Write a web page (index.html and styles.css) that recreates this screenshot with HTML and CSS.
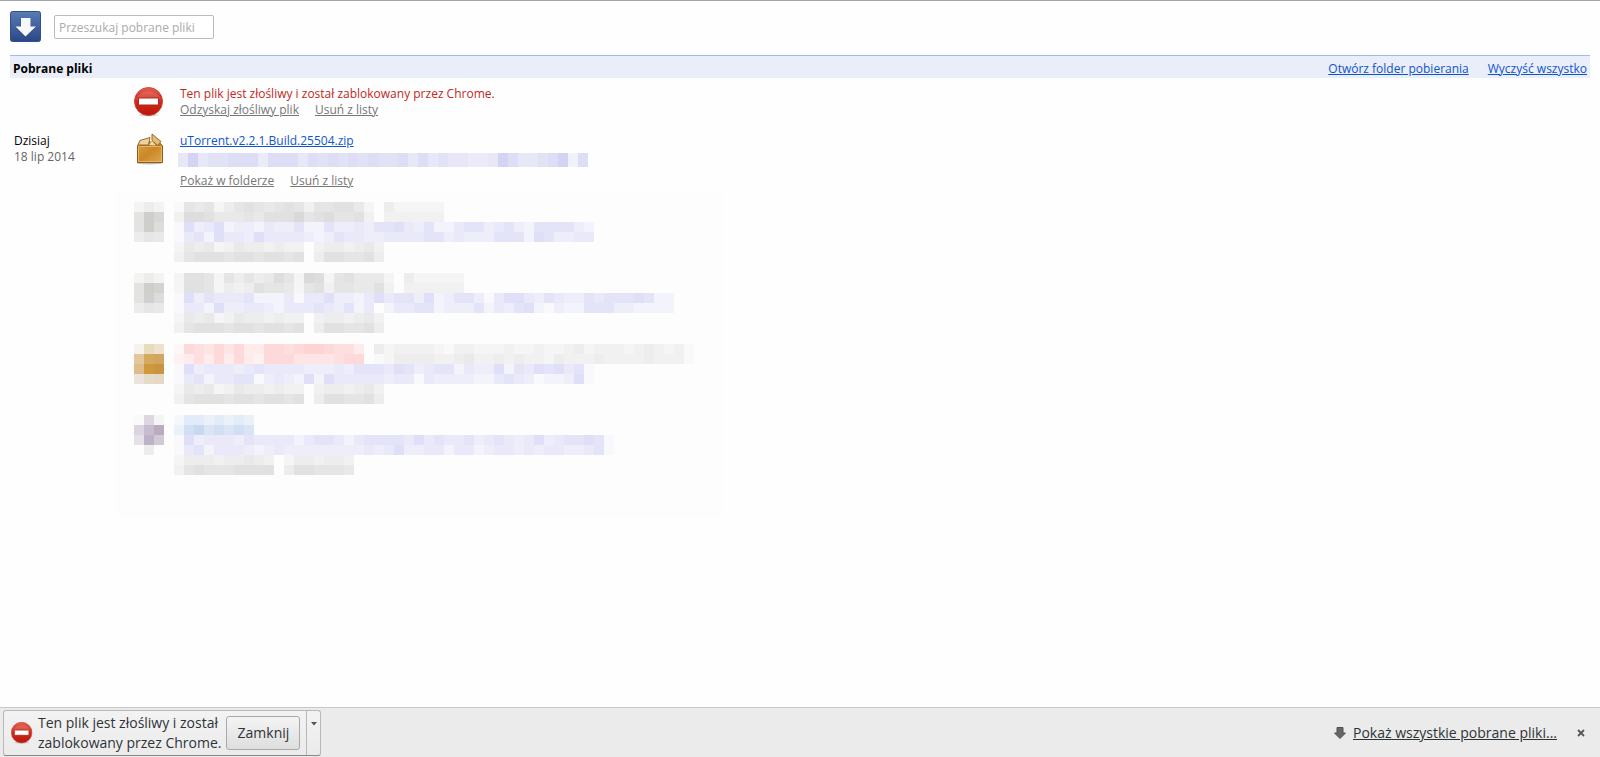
FILE: index.html
```html
<!DOCTYPE html>
<html lang="pl">
<head>
<meta charset="utf-8">
<title>Pobrane pliki</title>
<link rel="stylesheet" href="styles.css">
</head>
<body>
<svg class="defs" width="0" height="0" aria-hidden="true">
  <defs>
    <linearGradient id="blue" x1="0" y1="0" x2="0" y2="1"><stop offset="0" stop-color="#5b7bb4"/><stop offset=".5" stop-color="#41619f"/><stop offset="1" stop-color="#2b4685"/></linearGradient>
    <linearGradient id="red" x1="0" y1="0" x2="0" y2="1"><stop offset="0" stop-color="#e4604f"/><stop offset=".45" stop-color="#d02d1f"/><stop offset="1" stop-color="#b91509"/></linearGradient>
    <linearGradient id="box" x1="0" y1="0" x2="1" y2="1"><stop offset="0" stop-color="#d8a046"/><stop offset=".5" stop-color="#cb8826"/><stop offset="1" stop-color="#e0a754"/></linearGradient>
    <symbol id="stop" viewBox="0 0 30 30">
      <ellipse cx="14.500" cy="28" rx="10" ry="1.500" fill="#000" opacity=".15"/>
      <circle cx="14.500" cy="14.500" r="14" fill="url(#red)" stroke="#c9453a"/>
      <path d="M2 13a13 12 0 0 1 25 0q-13-4-25 0z" fill="#fff" opacity=".12"/>
      <rect x="4.500" y="11" width="20" height="7" fill="#fff" stroke="#b3261b"/>
    </symbol>
  </defs>
</svg>

<header class="top">
  <a class="logo" href="#" aria-label="Pobrane pliki">
    <svg viewBox="0 0 31 31"><rect x=".5" y=".5" width="30" height="30" rx="2" fill="url(#blue)" stroke="#304f8c"/><path d="M10.500 8h10v8h5.500L15.500 26.500 5 16h5.500z" fill="#1e3568" opacity=".5"/><path d="M11 7h9.500v8.500H26L15.500 25.500 5.500 15.500H11z" fill="#f7f8fb"/></svg>
  </a>
  <input class="search" type="text" placeholder="Przeszukaj pobrane pliki" aria-label="Przeszukaj pobrane pliki">
</header>

<main class="content">
  <div class="bar">
    <h1>Pobrane pliki</h1>
    <nav><a href="#">Otwórz folder pobierania</a><a href="#">Wyczyść wszystko</a></nav>
  </div>

  <article class="item">
    <div class="date"></div>
    <svg class="icon"><use href="#stop"/></svg>
    <div class="info">
      <p class="danger">Ten plik jest złośliwy i został zablokowany przez Chrome.</p>
      <p class="actions"><a href="#">Odzyskaj złośliwy plik</a><a href="#">Usuń z listy</a></p>
    </div>
  </article>

  <article class="item">
    <div class="date"><p class="day">Dzisiaj</p><p>18 lip 2014</p></div>
    <svg class="icon" viewBox="0 0 30 32">
      <ellipse cx="15.500" cy="30" rx="13" ry="1.500" fill="#000" opacity=".25"/>
      <path d="M3.500 13L6 9h19l3.500 4v16.500h-25z" fill="url(#box)" stroke="#8f5a14"/>
      <path d="M5 13l3-3h16l3 3z" fill="#b0742a"/>
      <path d="M4.500 13.500h23v15h-23z" fill="none" stroke="#edbd70" opacity=".8"/>
      <path d="M6 7.500L16 4.500l-1.500 7.500H4z" fill="#ecd2a1" stroke="#9a6826"/>
      <path d="M18 1l9 7.500-3.500 4L18 7.500z" fill="#e4bb78" stroke="#9a6826"/>
      <path d="M15 12l3-4 4 4.500z" fill="#f1d9ad"/>
    </svg>
    <div class="info">
      <p><a href="#">uTorrent.v2.2.1.Build.25504.zip</a></p>
      <div class="mosaic strip" data-rows="p3734455525 5535454545 4453534332 23753345715"></div>
      <p class="actions"><a href="#">Pokaż w folderze</a><a href="#">Usuń z listy</a></p>
    </div>
  </article>

  <section class="hidden-items" aria-hidden="true">
    <div class="hidden-item">
      <div class="mosaic" data-rows="#f4f4f3 #ededeb #f3f3f2/#e3e3e1 #cdcfcb #d7d7d5/#e3e3e1 #cdcfcb #dddddd/#ececec #e6e6e6 #e8e8e8"></div>
      <div class="mosaic" data-rows="g1656246765 6763667752 0422222/g3887555657 7796786673 0333333/b1634623324 3352253343 5564352245 534532555532/b1452644364 4443235443 3444455343 335552653344/g2545235443433 0 3443453/g3677767767767 0 4776674"></div>
    </div>
    <div class="hidden-item">
      <div class="mosaic" data-rows="#f4f4f3 #ededeb #f3f3f2/#e3e3e1 #cdcfcb #d3d3d1/#e3e3e1 #d0d0d0 #dadddc/#ececec #e6e6e6 #e8e8e8"></div>
      <div class="mosaic" data-rows="g2776264645 8629826755 520422222/g2776243476 6526736655 730333333/b1635444522 2414463324 6455362355 3146643543 3545556522/b1442633443 2444543524 0244552333 5243562132 2555332222/g2545235443433 0 3443453/g3677767767767 0 4776674"></div>
    </div>
    <div class="hidden-item">
      <div class="mosaic" data-rows="#f6f3ec #e9dcbe #eee2ce/#e3c89f #d5a95e #d2a661/#dfbd8b #d1983b #c79540/#ece4dc #e4dbcb #e4d8c8"></div>
      <div class="mosaic" data-rows="r1654646336 656776553 g0 4233332133 2223223223 4233323432 31/r2353636326 664444566 g0 1244443345 3343433243 3343333433 31/b1634443454 4443334355 5465345524 336254656451/b1452445513 4326264444 4344143333 224543122361/g2545235443433 0 3443453/g3677767767767 0 4776674"></div>
    </div>
    <div class="hidden-item">
      <div class="mosaic" data-rows="#fbfafb #dfd7df #f6f5f6/#dcd4df #c8bcd0 #bcabc0/#e6e0e8 #beb1ca #d1cad5/#fdfdfd #eeecef #fdfdfd"></div>
      <div class="mosaic" data-rows="s13323232/s25645454/b1634443544 4424554245 5554645445 34543463455651/b1452444323 4333333334 3463344244 23443434433451/g2444344543 0 2443443/g3676667777 0 4776665"></div>
    </div>
  </section>
</main>

<footer class="shelf">
  <div class="card">
    <div class="card-body">
      <svg class="card-icon"><use href="#stop"/></svg>
      <p>Ten plik jest złośliwy i został<br>zablokowany przez Chrome.</p>
      <button class="close-btn" type="button">Zamknij</button>
    </div>
    <button class="more" type="button" aria-label="Więcej opcji"><svg viewBox="0 0 6 4"><path d="M0 0h6L3 3.500z" fill="#555"/></svg></button>
  </div>
  <div class="shelf-right">
    <svg class="arrow" viewBox="0 0 12 12"><path d="M3 .5h6V6h2.500L6 11.500.5 6H3z" fill="#666" stroke="#505050"/></svg>
    <a href="#">Pokaż wszystkie pobrane pliki...</a>
    <button class="x" type="button" aria-label="Zamknij pasek"><svg viewBox="0 0 8 8"><path d="M1 1l6 6M7 1L1 7" stroke="#555" stroke-width="1.800"/></svg></button>
  </div>
</footer>
<script src="mosaic.js"></script>
</body>
</html>
```
FILE: styles.css
```css
* { box-sizing: border-box; }
body {
  margin: 0;
  min-height: 100vh;
  display: flex;
  flex-direction: column;
  border-top: 1px solid #a5a5a5;
  background: #fefefe;
  color: #000;
  font: 12px/16px "Open Sans", "Noto Sans", sans-serif;
}
p, h1 { margin: 0; }
a { color: #15c; text-decoration: underline; }
svg { display: block; }
.defs { position: absolute; }
.top {
  display: flex;
  align-items: flex-start;
  gap: 13px;
  padding: 10px 10px 13px;
}
.logo svg { width: 31px; height: 31px; }
.search {
  width: 160px;
  height: 24px;
  margin-top: 4px;
  padding: 1px 4px 0;
  border: 1px solid #bbb;
  border-radius: 2px;
  background: #fff;
  font: inherit;
}
.search::placeholder { color: #aaa; opacity: 1; }
.content { flex: 1; padding: 0 10px; }
.bar {
  display: flex;
  justify-content: space-between;
  align-items: center;
  height: 23px;
  padding: 3px 3px 0;
  border-top: 1px solid #9cbfe8;
  background: #e9eef9;
}
.bar h1 { font-size: 12px; line-height: 16px; }
.bar nav { display: flex; gap: 19px; }
.item {
  display: grid;
  grid-template-columns: 104px 30px 1fr;
  column-gap: 16px;
  padding: 8px 0 0 4px;
}
.item + .item { padding: 15px 0 2px 4px; }
.item .date { color: #666; }
.date .day { color: #000; }
.item .icon { width: 30px; height: 32px; }
.danger { color: #c0291c; }
.actions { display: flex; gap: 16px; }
.actions a { color: #777; }
.mosaic {
  display: grid;
  justify-content: start;
  align-content: start;
  grid-auto-rows: 10px;
}
.mosaic .row { display: grid; grid-auto-flow: column; grid-auto-columns: 10px; }
.strip { margin: 4px 0 6px -2px; grid-auto-rows: 14px; }
.hidden-items {
  width: 610px;
  max-width: 100%;
  margin-left: 104px;
  padding: 11px 0 31px 20px;
  background: #fdfdfd;
}
.hidden-item { display: flex; gap: 10px; padding-bottom: 11px; }
.shelf {
  display: flex;
  justify-content: space-between;
  align-items: center;
  height: 50px;
  padding: 0 10px 0 3px;
  border-top: 1px solid #c8c8c8;
  background: #ebebeb;
  color: #2e3436;
  font-size: 14px;
  line-height: 20px;
}
.card {
  display: flex;
  height: 46px;
  border: 1px solid #b8b8b8;
  border-bottom-color: #888;
  border-radius: 3px;
  background: linear-gradient(#f3f3f3, #ebebeb);
}
.card-body { display: flex; align-items: center; gap: 5px; padding: 0 6px 0 7px; }
.card-icon { width: 22px; height: 22px; }
.close-btn {
  width: 74px;
  height: 34px;
  padding: 0;
  border: 1px solid #a8a8a8;
  border-radius: 3px;
  background: linear-gradient(#f4f4f4, #dedede);
  color: inherit;
  font: inherit;
}
.more {
  width: 14px;
  padding: 0 0 17px;
  border: 0;
  border-left: 1px solid #b8b8b8;
  background: none;
}
.more svg { width: 6px; height: 4px; margin: 0 auto; }
.shelf-right { display: flex; align-items: center; gap: 7px; }
.shelf-right a { color: #2e3436; }
.arrow { width: 12px; height: 12px; }
.x { width: 18px; height: 18px; margin-left: 8px; padding: 5px; border: 0; background: none; }
.x svg { width: 8px; height: 8px; }
```
FILE: mosaic.js
```js
// Rows are separated by "/". A letter selects a hue, each digit adds a cell of that strength.
const hues = {
  g: n => [253 - 4 * n, 253 - 4 * n, 253 - 4 * n],
  b: n => [253 - 5 * n, 253 - 5 * n, 254 - n],
  p: n => [246 - 5 * n, 246 - 5 * n, 251 - n],
  r: n => [254, 253 - 6 * n, 253 - 6 * n],
  s: n => [253 - 9 * n, 253 - 6 * n, 253 - 2 * n]
};
for (const box of document.querySelectorAll(".mosaic")) {
  for (const code of box.dataset.rows.split("/")) {
    const row = document.createElement("div");
    row.className = "row";
    const colors = [];
    if (code.startsWith("#")) {
      colors.push(...code.split(" "));
    } else {
      let hue = hues.g;
      for (const c of code.replace(/ /g, "")) {
        if (hues[c]) hue = hues[c];
        else colors.push(`rgb(${hue(Number(c)).join(",")})`);
      }
    }
    for (const color of colors) {
      const cell = document.createElement("span");
      cell.style.background = color;
      row.append(cell);
    }
    box.append(row);
  }
}
```
